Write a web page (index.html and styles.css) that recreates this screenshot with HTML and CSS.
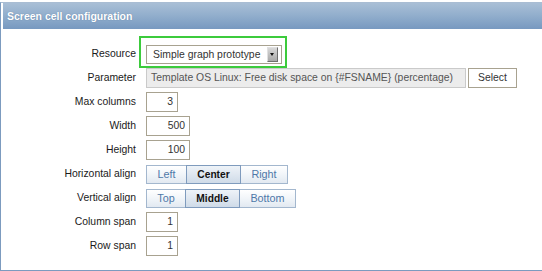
FILE: index.html
```html
<!DOCTYPE html>
<html>
<head>
<meta charset="utf-8">
<link rel="stylesheet" href="styles.css">
</head>
<body>
<div class="panel">
  <div class="header">Screen cell configuration</div>
  <div class="form">
    <div class="label">Resource</div>
    <div class="field">
      <div class="hl-wrap">
        <div class="select"><span class="select-text">Simple graph prototype</span><span class="arrow"></span></div>
        <span class="highlight"></span>
      </div>
    </div>

    <div class="label">Parameter</div>
    <div class="field">
      <div class="readonly">Template OS Linux: Free disk space on {#FSNAME} (percentage)</div>
      <div class="btn-select">Select</div>
    </div>

    <div class="label">Max columns</div>
    <div class="field"><div class="input narrow">3</div></div>

    <div class="label">Width</div>
    <div class="field"><div class="input wide">500</div></div>

    <div class="label">Height</div>
    <div class="field"><div class="input wide">100</div></div>

    <div class="label">Horizontal align</div>
    <div class="field">
      <div class="seg">
        <span class="seg-btn w40">Left</span><span class="seg-btn on w54">Center</span><span class="seg-btn w47">Right</span>
      </div>
    </div>

    <div class="label">Vertical align</div>
    <div class="field">
      <div class="seg">
        <span class="seg-btn w39">Top</span><span class="seg-btn on w54">Middle</span><span class="seg-btn w56">Bottom</span>
      </div>
    </div>

    <div class="label">Column span</div>
    <div class="field"><div class="input narrow">1</div></div>

    <div class="label">Row span</div>
    <div class="field"><div class="input narrow">1</div></div>
  </div>
</div>
</body>
</html>
```

FILE: styles.css
```css
html, body {
  margin: 0;
  padding: 0;
  background: #ffffff;
}
body {
  font-family: "Liberation Sans", Arial, sans-serif;
  font-size: 10.4px;
  color: #1a1a1a;
  overflow: hidden;
}
.panel {
  margin-top: 2px;
  width: 560px;
  height: 269px;
  border: 1px solid #7c9bbf;
  border-top-color: #a9bdd3;
  box-sizing: border-box;
  background: #fff;
}
.header {
  margin-left: 2px;
  height: 26px;
  background: linear-gradient(to bottom, #a9bfd6 0%, #93afcd 45%, #7799c0 100%);
  color: #fff;
  font-weight: bold;
  font-size: 10.5px;
  line-height: 26px;
  padding-left: 4px;
  text-shadow: 0 0 1px rgba(60, 90, 130, 0.6);
}
.form {
  display: grid;
  grid-template-columns: 135px auto;
  column-gap: 10px;
  row-gap: 4px;
  padding-top: 15px;
  align-items: center;
}
.label {
  text-align: right;
  line-height: 20px;
  white-space: nowrap;
}
.field {
  display: flex;
  align-items: center;
  height: 20px;
}
.hl-wrap {
  position: relative;
}
.highlight {
  position: absolute;
  left: -7px;
  top: -9px;
  right: -5px;
  bottom: -4px;
  border: 2px solid #3ccb3c;
  pointer-events: none;
}
.select {
  box-sizing: border-box;
  width: 136px;
  height: 19px;
  border: 1px solid #a8a290;
  display: flex;
  align-items: center;
  justify-content: space-between;
  padding: 0 3px 0 6px;
  color: #333;
  background: #fff;
}
.arrow {
  box-sizing: border-box;
  width: 11px;
  height: 15px;
  background: linear-gradient(to bottom, #d8d8d8, #a8a8a8);
  border: 1px solid #6f6f6f;
  border-top-color: #e0e0e0;
  border-left-color: #e0e0e0;
  position: relative;
}
.arrow::after {
  content: "";
  position: absolute;
  left: 2px;
  top: 5px;
  border-left: 2.5px solid transparent;
  border-right: 2.5px solid transparent;
  border-top: 3px solid #111;
}
.readonly {
  box-sizing: border-box;
  width: 320px;
  height: 20px;
  line-height: 18px;
  border: 1px solid #cacaca;
  background: #ececec;
  color: #555;
  padding-left: 4px;
  white-space: nowrap;
  overflow: hidden;
}
.btn-select {
  box-sizing: border-box;
  margin-left: 2px;
  width: 49px;
  height: 20px;
  line-height: 18px;
  border: 1px solid #a8a290;
  background: #fff;
  color: #333;
  text-align: center;
}
.input {
  box-sizing: border-box;
  height: 20px;
  line-height: 18px;
  border: 1px solid #a8a290;
  background: #fff;
  color: #333;
  text-align: right;
  padding-right: 4px;
}
.narrow { width: 32px; }
.wide { width: 44px; }
.seg {
  display: flex;
  height: 19px;
}
.seg-btn {
  box-sizing: border-box;
  height: 19px;
  line-height: 17px;
  text-align: center;
  border: 1px solid #a3b7ce;
  margin-left: -1px;
  background: linear-gradient(to bottom, #ffffff 0%, #f1f5f9 50%, #e2e9f1 100%);
  color: #4f78a8;
  font-size: 10.8px;
}
.seg-btn:first-child { margin-left: 0; }
.seg-btn.on {
  background: linear-gradient(to bottom, #eef3f8 0%, #dfe7f0 50%, #cfdbe8 100%);
  border-color: #7f9bbd;
  color: #111;
  font-weight: bold;
  font-size: 10.2px;
  position: relative;
}
.w39 { width: 40px; }
.w40 { width: 41px; }
.w47 { width: 48px; }
.w54 { width: 55px; }
.w56 { width: 57px; }
```
